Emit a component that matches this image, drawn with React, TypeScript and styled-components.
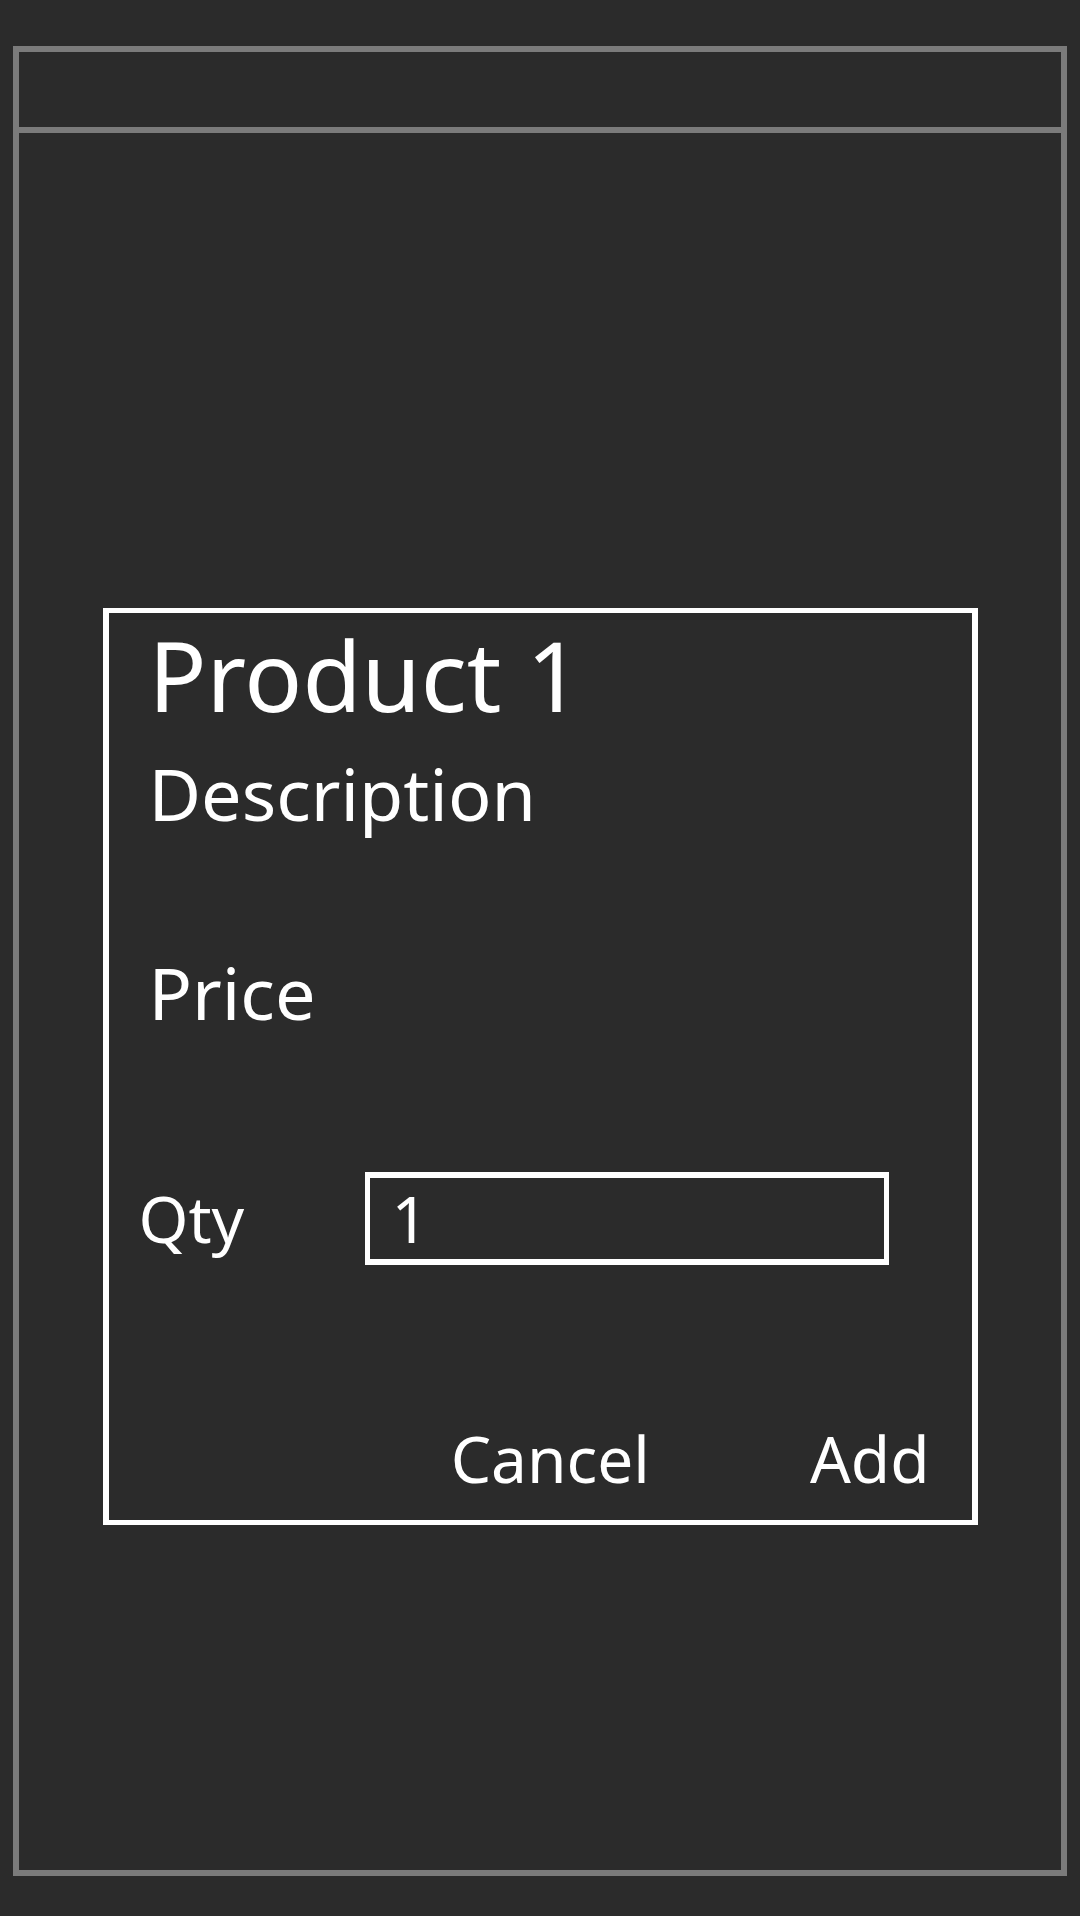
import React from "react";
import styled, { createGlobalStyle } from "styled-components";

const Global = createGlobalStyle`
  html, body {
    margin: 0;
    padding: 0;
    background: #2b2b2b;
  }
  * { box-sizing: border-box; }
`;

const Page = styled.div`
  width: 1080px;
  height: 1916px;
  background: #2b2b2b;
  padding: 46px 13px 40px 13px;
  font-family: "Noto Sans", "Open Sans", sans-serif;
  color: #ffffff;
`;

const Frame = styled.div`
  height: 1830px;
  border: 6px solid #7b7b7b;
  display: flex;
  flex-direction: column;
`;

const Header = styled.div`
  height: 81px;
  flex: none;
  border-bottom: 6px solid #7b7b7b;
`;

const Body = styled.div`
  flex: 1;
  display: flex;
  justify-content: center;
  align-items: flex-start;
  padding-top: 475px;
`;

const Dialog = styled.div`
  width: 875px;
  height: 917px;
  border-style: solid;
  border-color: #ffffff;
  border-width: 5px 6px;
  display: flex;
  flex-direction: column;
  padding: 2px 0 18px 0;
`;

const Title = styled.div`
  font-size: 96px;
  line-height: 120px;
  padding-left: 40px;
`;

const Label = styled.div<{ $gap: number }>`
  font-size: 72px;
  line-height: 98px;
  padding-left: 40px;
  margin-top: ${(p) => p.$gap}px;
`;

const QtyRow = styled.div`
  display: flex;
  align-items: center;
  margin-top: 131px;
  padding-left: 30px;
`;

const QtyLabel = styled.label`
  font-size: 64px;
  line-height: 87px;
  width: 226px;
`;

const QtyInput = styled.div`
  width: 524px;
  height: 93px;
  border-style: solid;
  border-color: #ffffff;
  border-width: 6px 5px;
  font-size: 64px;
  line-height: 81px;
  padding-left: 22px;
`;

const Actions = styled.div`
  margin-top: auto;
  display: flex;
  justify-content: flex-end;
  gap: 160px;
  padding-right: 42px;
`;

const ActionButton = styled.button`
  background: none;
  border: none;
  padding: 0;
  color: #ffffff;
  font-family: "Noto Sans", "Open Sans", sans-serif;
  font-size: 64px;
  line-height: 87px;
  cursor: pointer;
`;

export default function App() {
  return (
    <>
      <Global />
      <Page>
        <Frame>
          <Header />
          <Body>
            <Dialog>
              <Title>Product 1</Title>
              <Label $gap={9}>Description</Label>
              <Label $gap={101}>Price</Label>
              <QtyRow>
                <QtyLabel>Qty</QtyLabel>
                <QtyInput>1</QtyInput>
              </QtyRow>
              <Actions>
                <ActionButton>Cancel</ActionButton>
                <ActionButton>Add</ActionButton>
              </Actions>
            </Dialog>
          </Body>
        </Frame>
      </Page>
    </>
  );
}
